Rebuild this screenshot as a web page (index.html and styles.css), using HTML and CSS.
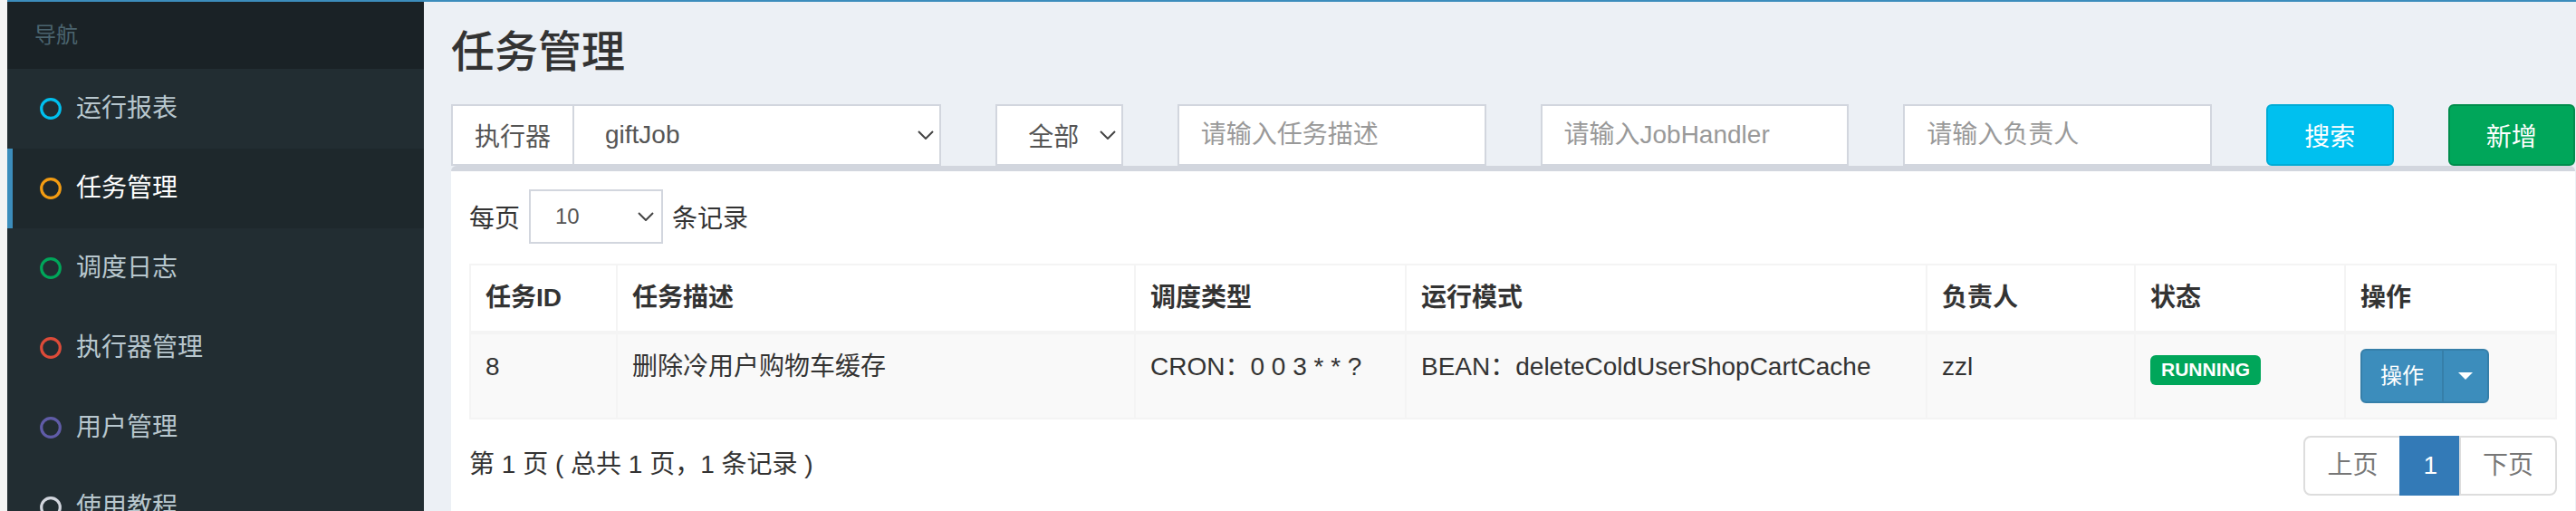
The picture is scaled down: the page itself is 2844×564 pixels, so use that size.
FILE: index.html
```html
<!DOCTYPE html>
<html lang="zh-CN">

<head>
  <meta charset="UTF-8">
  <meta name="viewport" content="width=device-width, initial-scale=1.0">
  <title>任务管理</title>
  <link rel="stylesheet" href="styles.css">
</head>

<body>
  <div class="wrapper">
    <!-- 左侧导航 -->
    <aside class="sidebar">
      <div class="nav-header">导航</div>
      <a class="nav-item">
        <svg class="nav-icon" viewBox="0 0 24 24"><circle cx="12" cy="12" r="10.3" stroke="#00c0ef" /></svg>
        运行报表
      </a>
      <a class="nav-item active">
        <svg class="nav-icon" viewBox="0 0 24 24"><circle cx="12" cy="12" r="10.3" stroke="#f39c12" /></svg>
        任务管理
      </a>
      <a class="nav-item">
        <svg class="nav-icon" viewBox="0 0 24 24"><circle cx="12" cy="12" r="10.3" stroke="#00a65a" /></svg>
        调度日志
      </a>
      <a class="nav-item">
        <svg class="nav-icon" viewBox="0 0 24 24"><circle cx="12" cy="12" r="10.3" stroke="#dd4b39" /></svg>
        执行器管理
      </a>
      <a class="nav-item">
        <svg class="nav-icon" viewBox="0 0 24 24"><circle cx="12" cy="12" r="10.3" stroke="#605ca8" /></svg>
        用户管理
      </a>
      <a class="nav-item">
        <svg class="nav-icon" viewBox="0 0 24 24"><circle cx="12" cy="12" r="10.3" stroke="#d2d6de" /></svg>
        使用教程
      </a>
    </aside>

    <!-- 主体 -->
    <main class="content">
      <h1 class="title">任务管理</h1>

      <div class="filters">
        <div class="input-group span-3">
          <span class="addon">执行器</span>
          <div class="select">
            <span>giftJob</span>
            <svg class="chevron" viewBox="0 0 18 10"><path d="M1 1 L9 9 L17 1" /></svg>
          </div>
        </div>
        <div class="select span-1">
          <span>全部</span>
          <svg class="chevron" viewBox="0 0 18 10"><path d="M1 1 L9 9 L17 1" /></svg>
        </div>
        <input class="field span-2" type="text" placeholder="请输入任务描述">
        <input class="field span-2" type="text" placeholder="请输入JobHandler">
        <input class="field span-2" type="text" placeholder="请输入负责人">
        <button class="btn btn-info">搜索</button>
        <button class="btn btn-success">新增</button>
      </div>

      <div class="box">
        <div class="length">
          每页
          <div class="select select-sm">
            <span>10</span>
            <svg class="chevron" viewBox="0 0 18 10"><path d="M1 1 L9 9 L17 1" /></svg>
          </div>
          条记录
        </div>

        <table class="job-table">
          <colgroup>
            <col class="col-id">
            <col class="col-desc">
            <col class="col-cron">
            <col class="col-mode">
            <col class="col-author">
            <col class="col-status">
            <col>
          </colgroup>
          <thead>
            <tr>
              <th>任务ID</th>
              <th>任务描述</th>
              <th>调度类型</th>
              <th>运行模式</th>
              <th>负责人</th>
              <th>状态</th>
              <th>操作</th>
            </tr>
          </thead>
          <tbody>
            <tr>
              <td>8</td>
              <td>删除冷用户购物车缓存</td>
              <td>CRON：0 0 3 * * ?</td>
              <td>BEAN：deleteColdUserShopCartCache</td>
              <td>zzl</td>
              <td><span class="label">RUNNING</span></td>
              <td>
                <div class="btn-group">
                  <button class="btn-op">操作</button>
                  <button class="btn-op btn-toggle"><span class="caret"></span></button>
                </div>
              </td>
            </tr>
          </tbody>
        </table>

        <div class="table-footer">
          <div class="info">第 1 页 ( 总共 1 页，1 条记录 )</div>
          <ul class="pagination">
            <li class="disabled">上页</li>
            <li class="current">1</li>
            <li class="disabled">下页</li>
          </ul>
        </div>
      </div>
    </main>
  </div>
</body>

</html>
```

FILE: styles.css
```css
html,
body {
  margin: 0;
  height: 100%;
  overflow: hidden;
}

body {
  background-color: #f4f4f4;
  font-family: "Liberation Sans", "Noto Sans CJK SC", sans-serif;
  font-size: 28px;
  color: #333;
}

.wrapper {
  display: flex;
  margin-left: 8px;
  height: 100%;
  border-top: 2px solid #3c8dbc;
  background-color: #ecf0f5;
}

/* 侧边栏 */
.sidebar {
  width: 460px;
  flex-shrink: 0;
  background-color: #222d32;
}

.nav-header {
  padding: 20px 50px 20px 30px;
  font-size: 24px;
  line-height: 34px;
  color: #4b646f;
  background-color: #1a2226;
}

.nav-item {
  display: flex;
  align-items: center;
  padding: 24px 10px 24px 30px;
  border-left: 6px solid transparent;
  line-height: 40px;
  color: #b8c7ce;
}

.nav-item.active {
  color: #fff;
  background-color: #1e282c;
  border-left-color: #3c8dbc;
}

.nav-icon {
  width: 24px;
  height: 24px;
  margin-right: 16px;
  fill: none;
  stroke-width: 3.2;
}

/* 主体 */
.content {
  flex: 1;
  padding: 0 1px 0 30px;
}

.title {
  margin: 0;
  padding-top: 30px;
  font-size: 48px;
  line-height: 1.1;
  font-weight: 500;
  color: #333;
}

.filters {
  display: grid;
  grid-template-columns: repeat(12, 1fr);
  column-gap: 60px;
  margin-top: 30px;
  height: 68px;
}

.span-1 {
  grid-column: span 1;
}

.span-2 {
  grid-column: span 2;
}

.span-3 {
  grid-column: span 3;
}

.input-group {
  display: flex;
}

.addon {
  display: flex;
  align-items: center;
  padding: 0 24px;
  background-color: #fff;
  border: 2px solid #d2d6de;
  border-right: 0;
  color: #555;
}

.select {
  display: flex;
  align-items: center;
  justify-content: space-between;
  flex: 1;
  min-width: 0;
  padding: 0 6px 0 34px;
  background-color: #fff;
  border: 2px solid #d2d6de;
  color: #555;
}

.chevron {
  width: 18px;
  height: 10px;
  fill: none;
  stroke: #444;
  stroke-width: 2;
}

.field {
  min-width: 0;
  padding: 0 24px;
  border: 2px solid #d2d6de;
  outline: none;
  font-family: inherit;
  font-size: 28px;
  color: #555;
  background-color: #fff;
}

.field::placeholder {
  color: #999;
}

.btn {
  border-radius: 6px;
  border: 2px solid;
  font-family: inherit;
  font-size: 28px;
  color: #fff;
}

.btn-info {
  background-color: #00c0ef;
  border-color: #00acd6;
}

.btn-success {
  background-color: #00a65a;
  border-color: #008d4c;
}

/* 列表 */
.box {
  height: 400px;
  padding: 20px;
  background-color: #fff;
  border-top: 6px solid #d2d6de;
  border-radius: 6px;
}

.length {
  display: flex;
  align-items: center;
  gap: 10px;
  height: 60px;
}

.select-sm {
  flex: none;
  width: 148px;
  height: 60px;
  box-sizing: border-box;
  padding: 0 8px 0 27px;
  font-size: 24px;
}

.job-table {
  width: 100%;
  margin-top: 22px;
  table-layout: fixed;
  border-collapse: collapse;
  border: 2px solid #f4f4f4;
}

.col-id {
  width: 162px;
}

.col-desc {
  width: 572px;
}

.col-cron {
  width: 299px;
}

.col-mode {
  width: 575px;
}

.col-author {
  width: 230px;
}

.col-status {
  width: 232px;
}

.job-table th,
.job-table td {
  padding: 16px;
  border: 2px solid #f4f4f4;
  line-height: 40px;
  text-align: left;
  vertical-align: top;
  white-space: nowrap;
}

.job-table th {
  font-weight: bold;
  border-bottom-width: 4px;
}

.job-table tbody tr {
  background-color: #f9f9f9;
}

.label {
  display: inline-block;
  padding: 5px 12px 7px;
  font-size: 21px;
  font-weight: bold;
  line-height: 1;
  color: #fff;
  background-color: #00a65a;
  border-radius: 6px;
  vertical-align: -1px;
}

.btn-group {
  display: inline-flex;
  vertical-align: top;
}

.btn-op {
  padding: 10px 20px;
  font-family: inherit;
  font-size: 24px;
  line-height: 36px;
  color: #fff;
  background-color: #3c8dbc;
  border: 2px solid #367fa9;
  border-radius: 6px 0 0 6px;
}

.btn-toggle {
  display: flex;
  align-items: center;
  padding: 0 16px;
  margin-left: -2px;
  border-radius: 0 6px 6px 0;
}

.caret {
  width: 0;
  height: 0;
  border-top: 8px solid #fff;
  border-left: 8px solid transparent;
  border-right: 8px solid transparent;
}

.table-footer {
  display: flex;
  justify-content: space-between;
  align-items: flex-start;
  margin-top: 18px;
}

.info {
  padding-top: 12px;
  line-height: 40px;
}

.pagination {
  display: flex;
  margin: 0;
  padding: 0;
  list-style: none;
}

.pagination li {
  padding: 11px 24px;
  line-height: 40px;
  border: 2px solid #ddd;
  margin-left: -2px;
  background-color: #fff;
}

.pagination li:first-child {
  border-radius: 8px 0 0 8px;
}

.pagination li:last-child {
  border-radius: 0 8px 8px 0;
}

.pagination .disabled {
  color: #777;
}

.pagination .current {
  color: #fff;
  background-color: #337ab7;
  border-color: #337ab7;
}
```
